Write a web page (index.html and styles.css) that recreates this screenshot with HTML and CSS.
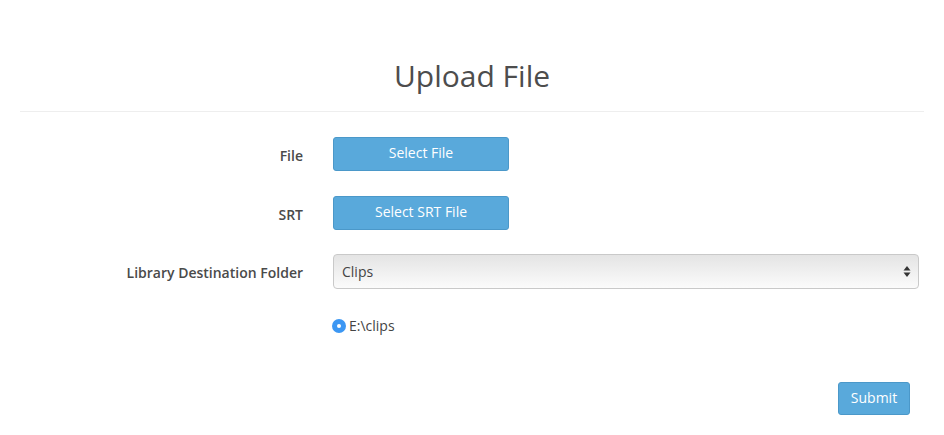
FILE: index.html
```html
<!DOCTYPE html>
<html>
<head>
    <title>Upload File</title>
    <link rel="stylesheet" href="styles.css">
</head>
<body>
    <div class="page">
        <h1 class="title">Upload File</h1>
        <hr class="rule">

        <form class="form">
            <div class="row">
                <label class="row-label">File</label>
                <div class="row-field">
                    <button type="button" class="btn btn-file">Select File</button>
                </div>
            </div>

            <div class="row">
                <label class="row-label">SRT</label>
                <div class="row-field">
                    <button type="button" class="btn btn-file">Select SRT File</button>
                </div>
            </div>

            <div class="row">
                <label class="row-label">Library Destination Folder</label>
                <div class="row-field">
                    <div class="select">
                        <span>Clips</span>
                        <svg width="8" height="13" viewBox="0 0 8 13">
                            <path d="M4 1 L7.5 5.5 L0.5 5.5 Z" fill="#333"/>
                            <path d="M4 12 L7.5 7.5 L0.5 7.5 Z" fill="#333"/>
                        </svg>
                    </div>
                </div>
            </div>

            <div class="row row-radio">
                <span></span>
                <label class="radio"><span class="radio-dot"></span>E:\clips</label>
            </div>

            <div class="actions">
                <button type="submit" class="btn btn-submit">Submit</button>
            </div>
        </form>
    </div>
</body>
</html>
```

FILE: styles.css
```css
:root {
    --text: #555;
    --label: #4a4a4a;
    --blue: #59a9db;
    --blue-border: #4b98c9;
    --line: #eee;
}

body {
    margin: 0;
    background-color: #fff;
    color: var(--text);
    font-family: "Open Sans", Arial, sans-serif;
    font-size: 14px;
}

.page {
    padding: 0 20px;
}

.title {
    margin: 0;
    padding-top: 59px;
    font-size: 30px;
    font-weight: 400;
    line-height: 1.1;
    text-align: center;
    color: #4d4d4d;
}

.rule {
    margin: 19px 0 0;
    border: 0;
    border-top: 1px solid var(--line);
}

.form {
    padding-top: 25px;
}

.row {
    display: grid;
    grid-template-columns: 283px 1fr;
    column-gap: 30px;
    align-items: center;
    margin-bottom: 25px;
    padding-right: 5px;
}

.row:nth-child(2) {
    margin-bottom: 24px;
}

.row:nth-child(3) {
    margin-bottom: 27px;
}

.row-label {
    text-align: right;
    font-weight: 600;
    color: var(--label);
    padding-top: 2px;
}

.btn {
    font-family: inherit;
    font-size: 14px;
    line-height: 1;
    padding: 0 0 2px;
    color: #fff;
    background-color: var(--blue);
    border: 1px solid var(--blue-border);
    border-radius: 3px;
    cursor: pointer;
}

.btn-file {
    width: 176px;
    height: 34px;
}

.select {
    display: flex;
    justify-content: space-between;
    align-items: center;
    height: 35px;
    box-sizing: border-box;
    padding: 0 7px 0 8px;
    border: 1px solid #c9c9c9;
    border-radius: 4px;
    background: linear-gradient(#e4e4e4, #fbfbfb);
    color: #444;
}

.row-radio {
    line-height: 20px;
    margin-bottom: 46px;
}

.radio {
    display: flex;
    align-items: center;
    gap: 3px;
    margin-left: -1px;
    color: #444;
}

.radio-dot {
    width: 14px;
    height: 14px;
    border-radius: 50%;
    background-color: #3c97f3;
    position: relative;
}

.radio-dot::after {
    content: "";
    position: absolute;
    left: 5px;
    top: 5px;
    width: 4px;
    height: 4px;
    border-radius: 50%;
    background-color: #fff;
}

.actions {
    display: flex;
    justify-content: flex-end;
    padding-right: 14px;
}

.btn-submit {
    width: 72px;
    height: 33px;
}
```
